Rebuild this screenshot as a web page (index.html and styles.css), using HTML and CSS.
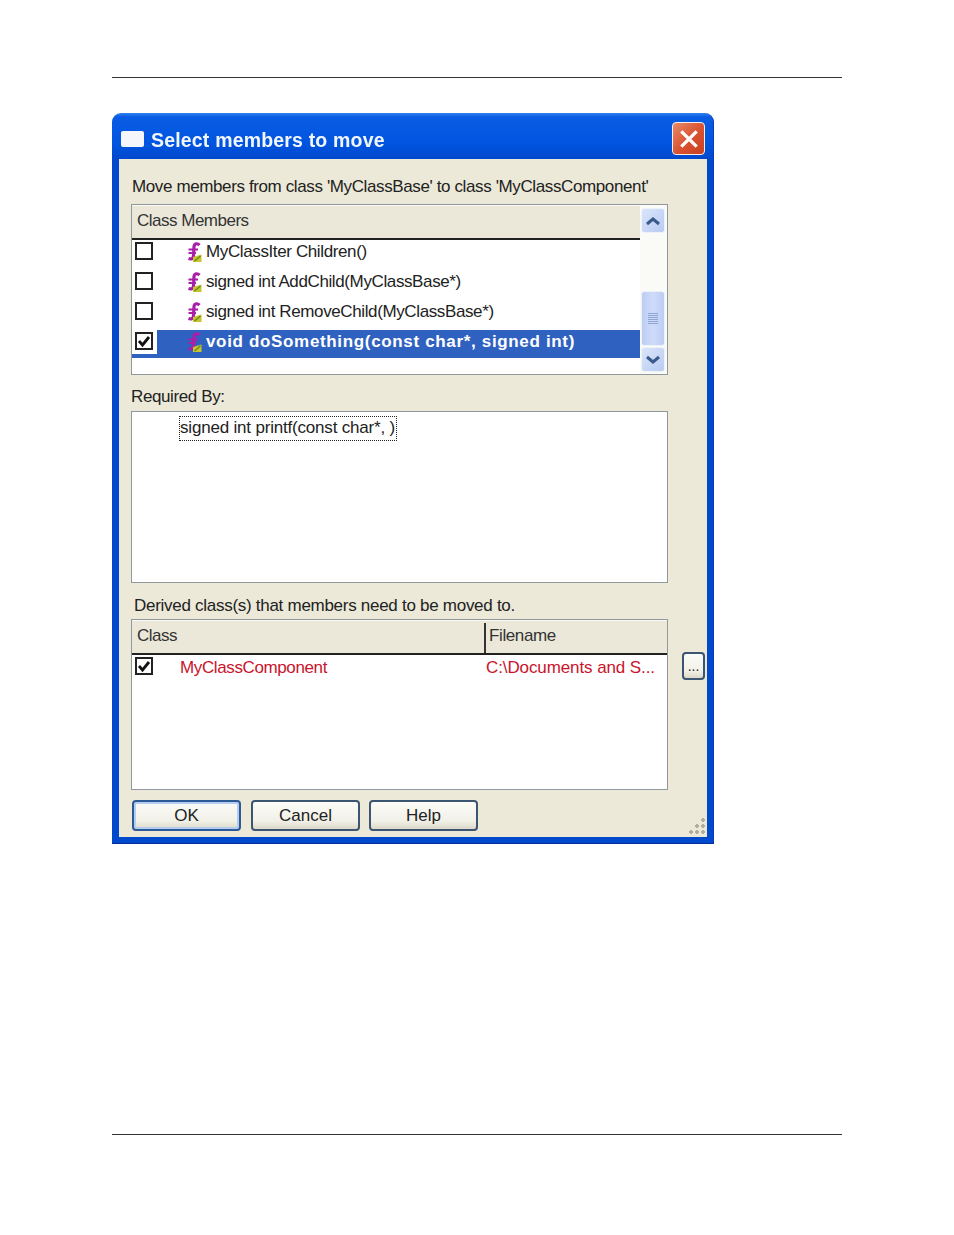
FILE: index.html
```html
<!DOCTYPE html>
<html lang="en">
<head>
<meta charset="utf-8">
<title>Select members to move</title>
<link rel="stylesheet" href="styles.css">
</head>
<body>
<svg width="0" height="0" class="defs">
  <symbol id="fn" viewBox="0 0 15 20">
    <path d="M12.5 3.2C10.5 1 7.5 1.2 7 4.5L6.5 14C6.3 16.5 4.5 17.5 1.5 16.5" fill="none" stroke="#a81fa8" stroke-width="3.2"/>
    <path d="M1.5 7.5H11M1.5 11H9" stroke="#a81fa8" stroke-width="2"/>
    <path d="M6 15L14.5 12.5V20H6Z" fill="#c8c42e"/>
    <path d="M7.5 19L13.5 14" stroke="#5f8f20" stroke-width="1.4"/>
  </symbol>
  <symbol id="tick" viewBox="0 0 14 14">
    <path d="M2 7L5.5 11L12 3" fill="none" stroke="#111" stroke-width="2.8"/>
  </symbol>
</svg>
<main class="page">
  <hr class="rule">
  <section class="window">
    <header class="titlebar">
      <span class="title-icon"></span>
      <h1 class="title">Select members to move</h1>
      <button class="close" aria-label="Close">
        <svg viewBox="0 0 20 20" width="22" height="22"><path d="M3 3L17 17M17 3L3 17" stroke="#fff" stroke-width="3"/></svg>
      </button>
    </header>
    <div class="client">
      <p class="label label-move">Move members from class 'MyClassBase' to class 'MyClassComponent'</p>
      <div class="listbox members">
        <div class="list-main">
          <div class="head"><span class="head-cell">Class Members</span></div>
          <div class="row">
            <span class="check"></span>
            <svg class="fn"><use href="#fn"/></svg>
            <span>MyClassIter Children()</span>
          </div>
          <div class="row">
            <span class="check"></span>
            <svg class="fn"><use href="#fn"/></svg>
            <span>signed int AddChild(MyClassBase*)</span>
          </div>
          <div class="row">
            <span class="check"></span>
            <svg class="fn"><use href="#fn"/></svg>
            <span>signed int RemoveChild(MyClassBase*)</span>
          </div>
          <div class="row selected">
            <span class="check-cell"><span class="check"><svg viewBox="0 0 14 14"><use href="#tick"/></svg></span></span>
            <svg class="fn"><use href="#fn"/></svg>
            <span>void doSomething(const char*, signed int)</span>
          </div>
        </div>
        <div class="scrollbar">
          <button class="sb-btn" aria-label="Up"><svg viewBox="0 0 16 10" width="16" height="10"><path d="M2 8L8 3L14 8" fill="none" stroke="#3a5a8c" stroke-width="3"/></svg></button>
          <div class="sb-track"></div>
          <div class="sb-thumb"><span class="grip"></span></div>
          <button class="sb-btn" aria-label="Down"><svg viewBox="0 0 16 10" width="16" height="10"><path d="M2 2L8 7L14 2" fill="none" stroke="#3a5a8c" stroke-width="3"/></svg></button>
        </div>
      </div>
      <p class="label label-req">Required By:</p>
      <div class="listbox required">
        <span class="focus-item">signed int printf(const char*, )</span>
      </div>
      <p class="label label-derived">Derived class(s) that members need to be moved to.</p>
      <div class="derived-row">
        <div class="listbox derived">
          <div class="head">
            <span class="head-cell col-class">Class</span>
            <span class="head-cell col-file">Filename</span>
          </div>
          <div class="row red">
            <span class="check"><svg viewBox="0 0 14 14"><use href="#tick"/></svg></span>
            <span class="cell-class">MyClassComponent</span>
            <span class="cell-file">C:\Documents and S...</span>
          </div>
        </div>
        <button class="btn browse">...</button>
      </div>
      <div class="buttons">
        <button class="btn primary">OK</button>
        <button class="btn">Cancel</button>
        <button class="btn">Help</button>
      </div>
      <span class="grip-corner"></span>
    </div>
  </section>
  <hr class="rule rule-bottom">
</main>
</body>
</html>
```
FILE: styles.css
```css
* { box-sizing: border-box; }
html, body { margin: 0; background: #fff; }
body { font-family: "Liberation Sans", Arial, sans-serif; color: #222; font-size: 17px; letter-spacing: -.38px; }
.defs { position: absolute; }
.page { width: 954px; height: 1235px; padding: 77px 112px 0; }
.rule { border: 0; height: 1px; background: #333; margin: 0; width: 730px; }
.rule-bottom { margin-top: 290px; }

.window {
  width: 602px; height: 731px; margin-top: 35px;
  border-radius: 9px 9px 0 0;
  background: linear-gradient(#2f80f0 0, #0a5ce4 4px, #0055e0 30px, #0048cc 46px);
  padding: 0 6px 6px 7px;
  display: flex; flex-direction: column;
  border-right: 1px solid #0a38b8;
  border-bottom: 1px solid #0a2c9c;
  filter: blur(.4px);
}
.titlebar { height: 46px; flex: none; display: flex; align-items: center; margin: 0 -4px; position: relative; }
.title-icon { width: 23px; height: 16px; margin: 5px 7px 0 6px; background: #f4f6fb; border-radius: 2px; flex: none; }
.title { margin: 8px 0 0; font-size: 19.5px; font-weight: bold; color: #f2f6ff; letter-spacing: .18px; }
.close {
  margin: 5px 6px 0 auto; width: 33px; height: 33px; padding: 0; flex: none;
  display: flex; align-items: center; justify-content: center;
  border: 1.5px solid #f4f0ea; border-radius: 4px;
  background: linear-gradient(135deg, #e88a68, #d9512f 55%, #c8401f);
}

.client { flex: 1; background: #ece9d8; padding: 18px 0 6px 12px; position: relative; }
.label { margin: 0; line-height: 20px; color: #222; }
.label-move { padding-left: 1px; }
.label-req { margin-top: 12px; margin-bottom: 4px; }
.label-derived { margin-top: 13px; margin-bottom: 3px; padding-left: 3px; letter-spacing: -.28px; }

.listbox { width: 537px; border: 1px solid #8f989c; background: #fff; }
.members { margin-top: 7px; height: 171px; display: flex; }
.required { height: 172px; padding: 4px 0 0 47px; }
.derived { height: 171px; flex: none; }
.derived-row { display: flex; align-items: flex-start; }

.list-main { width: 508px; flex: none; }
.head {
  height: 35px; display: flex; align-items: center;
  background: #ebe8da; border-bottom: 2px solid #222;
  box-shadow: inset 0 1px 0 #fbfaf4;
}
.head-cell { padding: 0 0 2px 5px; color: #333; letter-spacing: -.5px; }
.col-class { width: 352px; }
.col-file { height: 30px; margin-top: 2px; line-height: 26px; border-left: 2px solid #333; padding-left: 3px; letter-spacing: -.38px; }

.row { height: 28px; margin-bottom: 2px; display: flex; align-items: flex-start; line-height: 24px; color: #222; }
.check {
  width: 18px; height: 18px; margin: 2px 0 0 3px; flex: none;
  border: 2px solid #222; background: #fff; display: block;
}
.check svg { display: block; width: 14px; height: 14px; }
.fn { width: 15px; height: 20px; flex: none; margin: 2px 4px 0 34px; }
.selected { background: #2f62c0; color: #fff; font-weight: bold; letter-spacing: .66px; }
.check-cell { width: 25px; height: 24px; background: #fff; flex: none; margin-right: -4px; }
.red { color: #c8142c; line-height: 26px; }
.cell-class { width: 306px; margin-left: 27px; flex: none; }
.cell-file { letter-spacing: -.1px; }

.scrollbar { width: 27px; flex: none; background: #fafaf6; padding: 3px 2px 0 1px; position: relative; display: flex; flex-direction: column; }
.sb-btn {
  height: 25px; width: 24px; padding: 0; flex: none;
  display: flex; align-items: center; justify-content: center;
  border: 1px solid #eef2fb; border-radius: 3px;
  background: linear-gradient(135deg, #dbe5fa, #b9cbf3);
}
.sb-track { height: 58px; flex: none; }
.sb-thumb {
  width: 24px; height: 55px; margin-bottom: 1px; flex: none;
  display: flex; align-items: center; justify-content: center;
  border: 1px solid #eef2fb; border-radius: 3px;
  background: linear-gradient(90deg, #bccdf5, #cfdbf8 50%, #bccdf5);
}
.grip { display: block; width: 10px; height: 11px; background: repeating-linear-gradient(#8fa6d4 0 1px, transparent 1px 2px); }

.focus-item { display: inline-block; height: 25px; line-height: 23px; padding: 0 2px 0 1px; letter-spacing: -.19px; outline: 1.5px dotted #222; outline-offset: -1px; }

.btn {
  font: inherit; letter-spacing: 0; color: #222; height: 31px; width: 109px; padding: 0;
  border: 2px solid #3b5572; border-radius: 4px;
  background: linear-gradient(#fbfbf8, #f2f1e8 70%, #dcd8c8);
}
.primary { border-color: #2c5a96; box-shadow: inset 0 0 0 2px #b4cdf0; }
.browse { width: 23px; height: 28px; flex: none; margin: 33px 0 0 14px; line-height: 14px; font-size: 14px; border-radius: 4px; }
.buttons { display: flex; gap: 10px; margin-top: 10px; padding-left: 1px; }
.buttons .btn:last-child { margin-left: -1px; }
.grip-corner {
  position: absolute; right: 1px; bottom: 3px; width: 17px; height: 17px;
  background:
    radial-gradient(circle at 14px 3px, #b0aea0 1.6px, transparent 2px),
    radial-gradient(circle at 8px 9px, #b0aea0 1.6px, transparent 2px),
    radial-gradient(circle at 14px 9px, #b0aea0 1.6px, transparent 2px),
    radial-gradient(circle at 2px 15px, #b0aea0 1.6px, transparent 2px),
    radial-gradient(circle at 8px 15px, #b0aea0 1.6px, transparent 2px),
    radial-gradient(circle at 14px 15px, #b0aea0 1.6px, transparent 2px);
}
```
